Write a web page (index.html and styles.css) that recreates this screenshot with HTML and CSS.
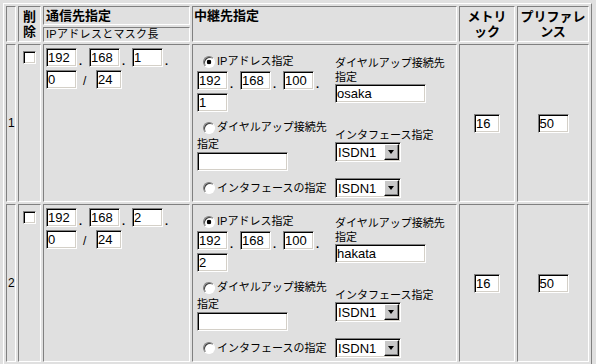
FILE: index.html
```html
<!DOCTYPE html>
<html lang="ja">
<head>
    <meta charset="UTF-8">
    <link rel="stylesheet" href="styles.css">
    <title>経路設定</title>
</head>
<body>
    <table class="routes">
        <colgroup>
            <col class="c-num">
            <col class="c-del">
            <col class="c-dest">
            <col class="c-relay">
            <col class="c-metric">
            <col class="c-pref">
        </colgroup>
        <tr class="head1">
            <th class="num" rowspan="2"></th>
            <th class="del" rowspan="2">削<br>除</th>
            <th class="dest">通信先指定</th>
            <th class="relay" rowspan="2">中継先指定</th>
            <th class="metric" rowspan="2">メトリ<br>ック</th>
            <th class="pref" rowspan="2">プリファレ<br>ンス</th>
        </tr>
        <tr class="head2">
            <td class="sub">IPアドレスとマスク長</td>
        </tr>

        <tr class="route">
            <td class="num">1</td>
            <td class="del"><input type="checkbox" class="cb"></td>
            <td class="dest">
                <div class="ip">
                    <input class="tx n3" value="192"><span class="dot">.</span>
                    <input class="tx n3" value="168"><span class="dot">.</span>
                    <input class="tx n3" value="1"><span class="dot">.</span>
                </div>
                <div class="ip">
                    <input class="tx n3" value="0"><span class="slash">/</span>
                    <input class="tx n2" value="24">
                </div>
            </td>
            <td class="relay">
                <div class="relay-grid">
                    <div class="mode-ip">
                        <label class="opt"><input type="radio" class="rd" name="via1" checked>IPアドレス指定</label>
                        <div class="ip">
                            <input class="tx n3" value="192"><span class="dot">.</span>
                            <input class="tx n3" value="168"><span class="dot">.</span>
                            <input class="tx n3" value="100"><span class="dot">.</span>
                        </div>
                        <div class="ip">
                            <input class="tx n3" value="1">
                        </div>
                    </div>
                    <div class="side side-top">
                        <div class="cap">ダイヤルアップ接続先<br>指定</div>
                        <input class="tx wide" value="osaka">
                    </div>
                    <div class="mode-dial">
                        <label class="opt"><input type="radio" class="rd" name="via1">ダイヤルアップ接続先</label>
                        <div class="cap">指定</div>
                        <input class="tx wide" value="">
                    </div>
                    <div class="side">
                        <div class="cap">インタフェース指定</div>
                        <span class="sel"><select><option>ISDN1</option></select><span class="arrow"></span></span>
                    </div>
                    <label class="opt"><input type="radio" class="rd" name="via1">インタフェースの指定</label>
                    <div class="side">
                        <span class="sel"><select><option>ISDN1</option></select><span class="arrow"></span></span>
                    </div>
                </div>
            </td>
            <td class="metric"><input class="tx n2" value="16"></td>
            <td class="pref"><input class="tx n3" value="50"></td>
        </tr>

        <tr class="route">
            <td class="num">2</td>
            <td class="del"><input type="checkbox" class="cb"></td>
            <td class="dest">
                <div class="ip">
                    <input class="tx n3" value="192"><span class="dot">.</span>
                    <input class="tx n3" value="168"><span class="dot">.</span>
                    <input class="tx n3" value="2"><span class="dot">.</span>
                </div>
                <div class="ip">
                    <input class="tx n3" value="0"><span class="slash">/</span>
                    <input class="tx n2" value="24">
                </div>
            </td>
            <td class="relay">
                <div class="relay-grid">
                    <div class="mode-ip">
                        <label class="opt"><input type="radio" class="rd" name="via2" checked>IPアドレス指定</label>
                        <div class="ip">
                            <input class="tx n3" value="192"><span class="dot">.</span>
                            <input class="tx n3" value="168"><span class="dot">.</span>
                            <input class="tx n3" value="100"><span class="dot">.</span>
                        </div>
                        <div class="ip">
                            <input class="tx n3" value="2">
                        </div>
                    </div>
                    <div class="side side-top">
                        <div class="cap">ダイヤルアップ接続先<br>指定</div>
                        <input class="tx wide" value="hakata">
                    </div>
                    <div class="mode-dial">
                        <label class="opt"><input type="radio" class="rd" name="via2">ダイヤルアップ接続先</label>
                        <div class="cap">指定</div>
                        <input class="tx wide" value="">
                    </div>
                    <div class="side">
                        <div class="cap">インタフェース指定</div>
                        <span class="sel"><select><option>ISDN1</option></select><span class="arrow"></span></span>
                    </div>
                    <label class="opt"><input type="radio" class="rd" name="via2">インタフェースの指定</label>
                    <div class="side">
                        <span class="sel"><select><option>ISDN1</option></select><span class="arrow"></span></span>
                    </div>
                </div>
            </td>
            <td class="metric"><input class="tx n2" value="16"></td>
            <td class="pref"><input class="tx n3" value="50"></td>
        </tr>

        <!-- next route row, only its top edge is on screen -->
        <tr class="route">
            <td class="num"></td>
            <td class="del"></td>
            <td class="dest"></td>
            <td class="relay"></td>
            <td class="metric"></td>
            <td class="pref"></td>
        </tr>
    </table>
</body>
</html>
```

FILE: styles.css
```css
html, body {
    margin: 0;
    overflow: hidden;
    background-color: #e0e0e0;
}

body {
    font-family: "Liberation Sans", "Noto Sans CJK JP", sans-serif;
    font-size: 11px;
    color: #000;
}

/* route table: classic raised table, sunken cells */
.routes {
    box-sizing: border-box;
    width: 589px;
    margin: 3px 0 0 3px;
    table-layout: fixed;
    border-spacing: 2px;
    border: 1px solid;
    border-color: #fff #808080 #808080 #fff;
}

.c-num { width: 10px; }
.c-del { width: 23px; }
.c-dest { width: 147px; }
.c-relay { width: 265px; }
.c-metric { width: 56px; }
.c-pref { width: 72px; }

th, td {
    box-sizing: border-box;
    padding: 0;
    border: 1px solid;
    border-color: #808080 #fff #fff #808080;
}

th {
    font-size: 13px;
    font-weight: bold;
    line-height: 15px;
}

.head1 th.dest {
    height: 18px;
    padding: 1px 0 0 2px;
    text-align: left;
    vertical-align: top;
    line-height: 16px;
}

.head2 td.sub {
    height: 15px;
    padding-left: 2px;
    line-height: 13px;
    letter-spacing: 0.3px;
}

.head1 th.relay {
    padding: 1px 0 0 1px;
    text-align: left;
    vertical-align: top;
    line-height: 16px;
}

.route {
    height: 158px;
}

td.num {
    padding-left: 1px;
    font-size: 12px;
    vertical-align: middle;
}

td.del {
    padding-top: 6px;
    vertical-align: top;
}

td.dest {
    padding: 3px 0 0 2px;
    vertical-align: top;
}

td.relay {
    padding: 8px 0 0 4px;
    vertical-align: top;
}

td.metric,
td.pref {
    text-align: center;
    vertical-align: middle;
}

/* form controls, windows classic look */
.tx {
    box-sizing: border-box;
    height: 19px;
    margin: 0;
    padding: 0 1px;
    border: 1px solid;
    border-color: #808080 #fff #fff #808080;
    box-shadow: inset 1px 1px 0 #000, inset -1px -1px 0 #d4d0c8;
    background-color: #fff;
    font-family: "Liberation Sans", sans-serif;
    font-size: 13px;
    color: #000;
    outline: none;
}

.n3 { width: 31px; }
.n2 { width: 26px; }
.wide { width: 91px; }

.cb {
    appearance: none;
    display: block;
    width: 13px;
    height: 13px;
    margin: 0 auto;
    border: 1px solid;
    border-color: #808080 #fff #fff #808080;
    box-shadow: inset 1px 1px 0 #000, inset -1px -1px 0 #d4d0c8;
    background-color: #fff;
}

.rd {
    appearance: none;
    flex: none;
    width: 12px;
    height: 12px;
    margin: 0 2px 0 6px;
    border-radius: 50%;
    border: 1px solid;
    border-color: #808080 #fff #fff #808080;
    box-shadow: inset 1px 1px 0 #404040;
    background-color: #fff;
}

.rd:checked {
    background: radial-gradient(circle, #000 0 2px, #fff 2.6px);
}

.ip {
    display: flex;
    align-items: flex-end;
}

.ip + .ip {
    margin-top: 3px;
}

.dot {
    width: 3px;
    margin: 0 7px 0 2px;
    font-weight: bold;
    line-height: 12px;
}

.slash {
    width: 4px;
    margin: 0 9px 0 6px;
    font-size: 12px;
    line-height: 15px;
}

/* relay cell: options on the left, their values on the right */
.relay-grid {
    display: grid;
    grid-template-columns: 138px 1fr;
    grid-template-rows: 60px 52px 22px;
    row-gap: 6px;
    align-items: center;
}

.opt {
    display: flex;
    align-items: center;
    height: 15px;
    line-height: 15px;
    white-space: nowrap;
}

.mode-ip .opt {
    margin-bottom: 2px;
}

.mode-dial .opt {
    height: 17px;
}

.cap {
    line-height: 14px;
    white-space: nowrap;
}

.mode-dial .cap {
    line-height: 16px;
}

.side-top {
    align-self: start;
    margin-top: 3px;
}

.sel {
    position: relative;
    display: inline-block;
    width: 66px;
    height: 20px;
    vertical-align: top;
}

.sel select {
    appearance: none;
    box-sizing: border-box;
    width: 100%;
    height: 100%;
    margin: 0;
    padding: 0 0 0 2px;
    border: 1px solid;
    border-color: #808080 #fff #fff #808080;
    box-shadow: inset 1px 1px 0 #000, inset -1px -1px 0 #d4d0c8;
    border-radius: 0;
    background-color: #fff;
    font-family: "Liberation Sans", sans-serif;
    font-size: 13px;
    color: #000;
}

.arrow {
    position: absolute;
    top: 2px;
    right: 2px;
    box-sizing: border-box;
    width: 15px;
    height: 16px;
    border: 1px solid;
    border-color: #fff #000 #000 #fff;
    box-shadow: inset -1px -1px 0 #808080;
    background-color: #c8c8c8;
}

.arrow::after {
    content: "";
    position: absolute;
    left: 3px;
    top: 5px;
    border-style: solid;
    border-width: 4px 3.5px 0 3.5px;
    border-color: #000 transparent transparent transparent;
}
```
